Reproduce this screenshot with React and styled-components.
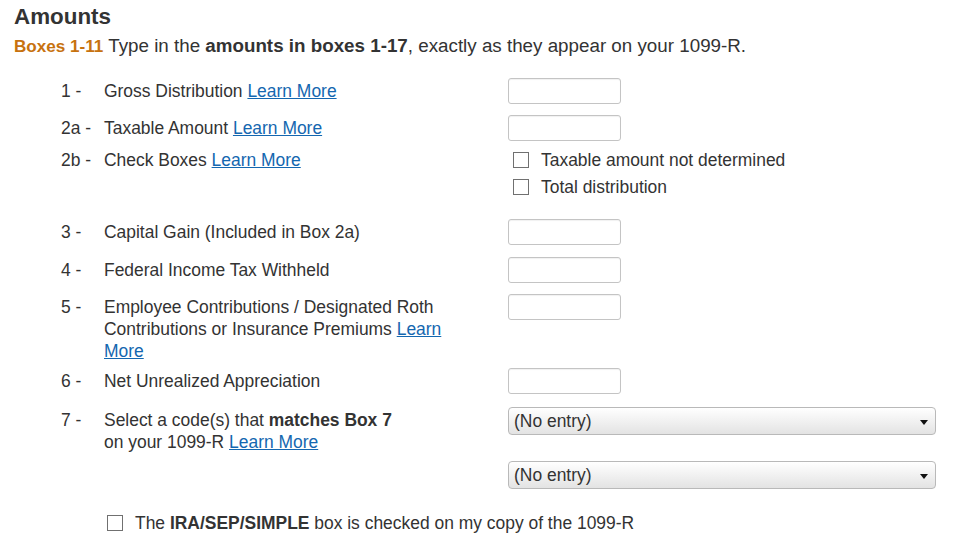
import React from 'react';
import styled, { createGlobalStyle } from 'styled-components';

const GlobalStyle = createGlobalStyle`
  html, body {
    margin: 0;
    padding: 0;
    background: #ffffff;
  }
  body {
    font-family: "Liberation Sans", Arial, sans-serif;
    color: #333333;
  }
`;

const Page = styled.div`
  padding: 3px 14px 0 14px;
  font-size: 17.45px;
`;

const Title = styled.h2`
  margin: 0;
  font-size: 22.4px;
  line-height: 28px;
  font-weight: bold;
  color: #333333;
`;

const Intro = styled.p`
  margin: 4px 0 0 0;
  font-size: 18.8px;
  line-height: 22px;
`;

const Accent = styled.strong`
  font-size: 17.1px;
  color: #c7720f;
`;

const Form = styled.div`
  margin-top: 20px;
  display: flex;
  flex-direction: column;
`;

const Row = styled.div`
  display: grid;
  grid-template-columns: 43px 404px 1fr;
  margin-left: 47px;
  margin-bottom: ${(p) => p.$gap}px;
`;

const Num = styled.span`
  padding-top: 2px;
  line-height: 22px;
  white-space: nowrap;
`;

const Label = styled.div`
  padding-top: 2px;
  line-height: 22px;
  max-width: 354px;
`;

const Field = styled.div`
  display: flex;
  flex-direction: column;
  gap: 3px;
`;

const Link = styled.a`
  color: #1467b0;
  text-decoration: underline;
  cursor: pointer;
`;

const TextInput = styled.input`
  box-sizing: border-box;
  width: 113px;
  height: 26px;
  border: 1px solid #c4c4c4;
  border-radius: 3px;
  box-shadow: inset 0 1px 1px rgba(0, 0, 0, 0.06);
  background: #ffffff;
  margin: 0;
`;

const Check = styled.label`
  display: flex;
  align-items: center;
  gap: 12px;
  margin-top: 2px;
  line-height: 22px;
  padding-left: ${(p) => p.$indent || 0}px;
  cursor: pointer;
`;

const Box = styled.span`
  box-sizing: border-box;
  width: 16px;
  height: 16px;
  border: 1px solid #707070;
  background: #ffffff;
  flex-shrink: 0;
`;

const SelectBox = styled.div`
  box-sizing: border-box;
  width: 428px;
  height: 28px;
  display: flex;
  align-items: center;
  justify-content: space-between;
  padding: 0 7px 0 5px;
  border: 1px solid #b9b9b9;
  border-radius: 4px;
  background: linear-gradient(to bottom, #ffffff 0%, #f1f1f1 50%, #e3e3e3 100%);
  color: #333333;
  cursor: pointer;
`;

const Arrow = styled.span`
  width: 0;
  height: 0;
  border-left: 4px solid transparent;
  border-right: 4px solid transparent;
  border-top: 5px solid #111111;
  margin-top: 2px;
`;

const Footer = styled.div`
  margin-left: 93px;
`;

const LearnMore = () => <Link>Learn More</Link>;

const Select = () => (
  <SelectBox>
    <span>(No entry)</span>
    <Arrow />
  </SelectBox>
);

const App = () => (
  <>
    <GlobalStyle />
    <Page>
      <Title>Amounts</Title>
      <Intro>
        <Accent>Boxes 1-11</Accent> Type in the <strong>amounts in boxes 1-17</strong>, exactly as they appear on your 1099-R.
      </Intro>

      <Form>
        <Row $gap={11}>
          <Num>1 -</Num>
          <Label>Gross Distribution <LearnMore /></Label>
          <Field><TextInput /></Field>
        </Row>
        <Row $gap={6}>
          <Num>2a -</Num>
          <Label>Taxable Amount <LearnMore /></Label>
          <Field><TextInput /></Field>
        </Row>
        <Row $gap={21}>
          <Num>2b -</Num>
          <Label>Check Boxes <LearnMore /></Label>
          <Field>
            <Check $indent={5}><Box /><span>Taxable amount not determined</span></Check>
            <Check $indent={5}><Box /><span>Total distribution</span></Check>
          </Field>
        </Row>
        <Row $gap={12}>
          <Num>3 -</Num>
          <Label>Capital Gain (Included in Box 2a)</Label>
          <Field><TextInput /></Field>
        </Row>
        <Row $gap={11}>
          <Num>4 -</Num>
          <Label>Federal Income Tax Withheld</Label>
          <Field><TextInput /></Field>
        </Row>
        <Row $gap={6}>
          <Num>5 -</Num>
          <Label>
            Employee Contributions / Designated Roth Contributions or Insurance Premiums <LearnMore />
          </Label>
          <Field><TextInput /></Field>
        </Row>
        <Row $gap={13}>
          <Num>6 -</Num>
          <Label>Net Unrealized Appreciation</Label>
          <Field><TextInput /></Field>
        </Row>
        <Row $gap={8}>
          <Num>7 -</Num>
          <Label>
            Select a code(s) that <strong>matches Box 7</strong>
            <br />
            on your 1099-R <LearnMore />
          </Label>
          <Field><Select /></Field>
        </Row>
        <Row $gap={21}>
          <span />
          <span />
          <Field><Select /></Field>
        </Row>
      </Form>

      <Footer>
        <Check>
          <Box />
          <span>The <strong>IRA/SEP/SIMPLE</strong> box is checked on my copy of the 1099-R</span>
        </Check>
      </Footer>
    </Page>
  </>
);

export default App;
